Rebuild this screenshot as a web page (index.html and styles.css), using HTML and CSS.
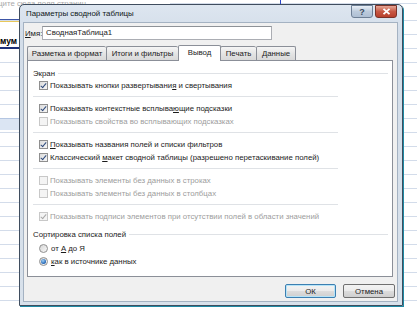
FILE: index.html
```html
<!DOCTYPE html>
<html>
<head>
<title>Параметры сводной таблицы</title>
<link rel="stylesheet" href="styles.css">
</head>
<body>
<div class="desk">
    <div class="sheet">
        <div class="hint">Перетащите сюда поля страниц</div>
        <div class="row-blue"></div>
        <div class="row-yellow"></div>
        <div class="row-bold">Максимум</div>
        <div class="row-sel"></div>
        <div class="col-mark"></div>
    </div>

    <div class="dialog">
        <div class="titlebar">
            <span class="title">Параметры сводной таблицы</span>
            <div class="controls">
                <span class="btn-help">?</span>
                <span class="btn-close">
                    <svg width="9" height="7" viewBox="0 0 9 7"><path d="M1.5 0.8 L7.5 6.2 M7.5 0.8 L1.5 6.2" stroke="#fff" stroke-width="1.8"/></svg>
                </span>
            </div>
        </div>
        <div class="client">
            <div class="name-row">
                <span class="label"><u>И</u>мя:</span>
                <span class="input">СводнаяТаблица1</span>
            </div>

            <div class="tabs">
                <span class="tab t1">Разметка и формат</span>
                <span class="tab t2">Итоги и фильтры</span>
                <span class="tab t3 active">Вывод</span>
                <span class="tab t4">Печать</span>
                <span class="tab t5">Данные</span>
            </div>

            <div class="panel">
                <div class="group"><span>Экран</span></div>
                <div class="opt"><span class="cb on"></span><span>Показывать кнопки развертывани<u>я</u> и свертывания</span></div>
                <div class="sep"></div>
                <div class="opt"><span class="cb on"></span><span>Показывать контекстные всплыва<u>ю</u>щие подсказки</span></div>
                <div class="opt off"><span class="cb"></span><span>Показывать свойства во всплывающих подсказках</span></div>
                <div class="sep"></div>
                <div class="opt"><span class="cb on"></span><span><u>П</u>оказывать названия полей и списки фильтров</span></div>
                <div class="opt"><span class="cb on"></span><span>Классический <u>м</u>акет сводной таблицы (разрешено перетаскивание полей)</span></div>
                <div class="sep"></div>
                <div class="opt off"><span class="cb"></span><span>Показывать элементы без данных в строках</span></div>
                <div class="opt off"><span class="cb"></span><span>Показывать элементы без данных в столбцах</span></div>
                <div class="sep"></div>
                <div class="opt off"><span class="cb on"></span><span>Показывать подписи элементов при отсутствии полей в области значений</span></div>
                <div class="group sort"><span>Сортировка списка полей</span></div>
                <div class="opt radio-first"><span class="rb"></span><span>от <u>А</u> до Я</span></div>
                <div class="opt"><span class="rb on"></span><span><u>к</u>ак в источнике данных</span></div>
            </div>

            <div class="buttons">
                <span class="button default">ОК</span>
                <span class="button">Отмена</span>
            </div>
        </div>
    </div>
</div>
</body>
</html>
```

FILE: styles.css
```css
body {
    margin: 0;
    font-family: "Liberation Sans", Arial, sans-serif;
    font-size: 7.8px;
    color: #1b1b1b;
}
.desk {
    position: relative;
    width: 417px;
    height: 311px;
    overflow: hidden;
    background-color: #fff;
    background-image: repeating-linear-gradient(to bottom, transparent 0, transparent 13px, #d3dcea 13px, #d3dcea 14px);
    background-position: 0 7px;
}

/* spreadsheet behind the dialog */
.sheet {
    position: absolute;
    left: 0;
    top: 0;
    width: 20px;
    height: 311px;
}
.hint {
    position: absolute;
    left: -30px;
    top: -1px;
    width: 200px;
    color: #a9a9a9;
    background: #fff;
    height: 10px;
    line-height: 9px;
    white-space: nowrap;
}
.row-blue {
    position: absolute;
    left: 0;
    top: 19px;
    width: 20px;
    height: 1px;
    background: #3d55a6;
}
.row-yellow {
    position: absolute;
    left: 0;
    top: 21px;
    width: 20px;
    height: 14px;
    background: #fff;
    border-top: 1px solid #e9c85a;
}
.row-bold {
    position: absolute;
    left: -26px;
    top: 36px;
    width: 46px;
    height: 11px;
    line-height: 11px;
    background: #fff;
    font-weight: bold;
    font-size: 8.5px;
    color: #000;
    border-bottom: 2px solid #1c2f78;
    white-space: nowrap;
    overflow: hidden;
}
.row-sel {
    position: absolute;
    left: 0;
    top: 118px;
    width: 20px;
    height: 11px;
    background: #dbe5f3;
    border-top: 1px solid #b4c6e2;
}
.col-mark {
    position: absolute;
    left: 280px;
    top: 0;
    width: 1px;
    height: 4px;
    background: #2a46c8;
}

/* dialog window */
.dialog {
    position: absolute;
    left: 19px;
    top: 4px;
    width: 375px;
    height: 297px;
    border: 1px solid #3f4d5e;
    border-radius: 5px 5px 0 0;
    background: linear-gradient(to bottom, #dde6f0, #d3dde9 30px, #d8e1eb);
    box-shadow: 1px 1px 0 #1f8aa5;
    display: flex;
    flex-direction: column;
    padding: 0 4px 3px 3px;
}
.titlebar {
    height: 17px;
    display: flex;
    align-items: center;
    justify-content: space-between;
}
.title {
    padding-left: 3px;
    font-size: 7.9px;
    color: #101820;
}
.controls {
    display: flex;
    gap: 2px;
    align-self: flex-start;
    margin-top: 0;
    margin-right: 1px;
}
.btn-help, .btn-close {
    display: flex;
    align-items: center;
    justify-content: center;
    height: 13px;
    border: 1px solid #6d7f95;
    border-radius: 0 0 3px 3px;
    box-sizing: border-box;
}
.btn-help {
    width: 22px;
    background: linear-gradient(to bottom, #e9eff6, #bccbdc 50%, #aebfd3);
    color: #3b4a5e;
    font-size: 9px;
    font-weight: bold;
}
.btn-close {
    width: 22px;
    background: linear-gradient(to bottom, #e6a796, #c75844 50%, #b8402c);
    border-color: #7a3228;
}

.client {
    flex: 1;
    background: #f0f0f0;
    border: 1px solid #a4b2c2;
    display: flex;
    flex-direction: column;
}
.name-row {
    display: flex;
    align-items: center;
    margin-top: 3px;
    padding-left: 1px;
    height: 14px;
}
.label {
    width: 17px;
}
.input {
    width: 230px;
    height: 14px;
    box-sizing: border-box;
    border: 1px solid #abadb3;
    border-top-color: #8e9297;
    background: #fff;
    padding-left: 3px;
    line-height: 12px;
}

.tabs {
    display: flex;
    align-items: flex-end;
    margin: 5px 0 0 3px;
    height: 15px;
    position: relative;
    z-index: 1;
}
.tab {
    height: 14px;
    box-sizing: border-box;
    border: 1px solid #8b8f98;
    border-bottom: none;
    border-right: none;
    background: linear-gradient(to bottom, #f5f5f5, #e3e3e3 55%, #d9d9d9);
    display: flex;
    align-items: center;
    justify-content: center;
    border-radius: 2px 2px 0 0;
}
.t1 { width: 79px; }
.t2 { width: 72px; }
.t3 { width: 43px; }
.t4 { width: 36px; }
.t5 { width: 40px; border-right: 1px solid #8b8f98; }
.tab.active {
    height: 16px;
    margin-bottom: -1px;
    background: #fff;
    border-right: 1px solid #8b8f98;
    margin-right: -1px;
    align-items: flex-start;
    padding-top: 2px;
}

.panel {
    margin-left: 3px;
    width: 366px;
    height: 217px;
    box-sizing: border-box;
    border: 1px solid #8b8f98;
    background: #fff;
    padding: 6px 4px 0 5px;
    display: flex;
    flex-direction: column;
}
.group {
    height: 12px;
    display: flex;
    align-items: center;
    gap: 3px;
}
.group::after {
    content: "";
    flex: 1;
    height: 1px;
    background: #dfe2e6;
}
.group.sort {
    margin-top: 5px;
}
.opt {
    height: 13px;
    display: flex;
    align-items: center;
    padding-left: 6px;
    white-space: nowrap;
}
.opt.off {
    color: #9d9d9d;
}
.radio-first {
    margin-top: 2px;
}
.sep {
    width: 305px;
    height: 1px;
    background: #dfe2e6;
    margin: 4px 0 5px;
}
.sep:first-of-type {
    margin-top: 5px;
}

.cb {
    width: 9px;
    height: 9px;
    box-sizing: border-box;
    border: 1px solid #8f8f8f;
    background: linear-gradient(135deg, #dcdcdc, #f6f6f6);
    margin-right: 2px;
    position: relative;
}
.cb.on::after {
    content: "";
    position: absolute;
    left: 2px;
    top: 0px;
    width: 2px;
    height: 5px;
    border-right: 1.5px solid #2f4b7c;
    border-bottom: 1.5px solid #2f4b7c;
    transform: rotate(40deg);
}
.off .cb {
    border-color: #c8c8c8;
    background: #f4f4f4;
}
.off .cb.on::after {
    border-color: #a8a8a8;
}
.rb {
    width: 9px;
    height: 9px;
    box-sizing: border-box;
    border: 1px solid #8f8f8f;
    border-radius: 50%;
    background: linear-gradient(135deg, #d6d6d6, #f8f8f8);
    margin-right: 3px;
    position: relative;
}
.rb.on::after {
    content: "";
    position: absolute;
    left: 1px;
    top: 1px;
    width: 5px;
    height: 5px;
    border-radius: 50%;
    background: radial-gradient(circle at 40% 35%, #9fd0f5, #1f62b4 70%);
}

.buttons {
    display: flex;
    justify-content: flex-end;
    gap: 7px;
    margin: 7px 2px 0 0;
}
.button {
    height: 14px;
    box-sizing: border-box;
    border: 1px solid #707070;
    border-radius: 2px;
    background: linear-gradient(to bottom, #f3f3f3, #ebebeb 50%, #dddddd 51%, #cfcfcf);
    display: flex;
    align-items: center;
    justify-content: center;
    width: 52px;
}
.button.default {
    width: 51px;
    border-color: #3c7fb1;
    box-shadow: inset 0 0 0 1px #b6e4f8;
}
```
